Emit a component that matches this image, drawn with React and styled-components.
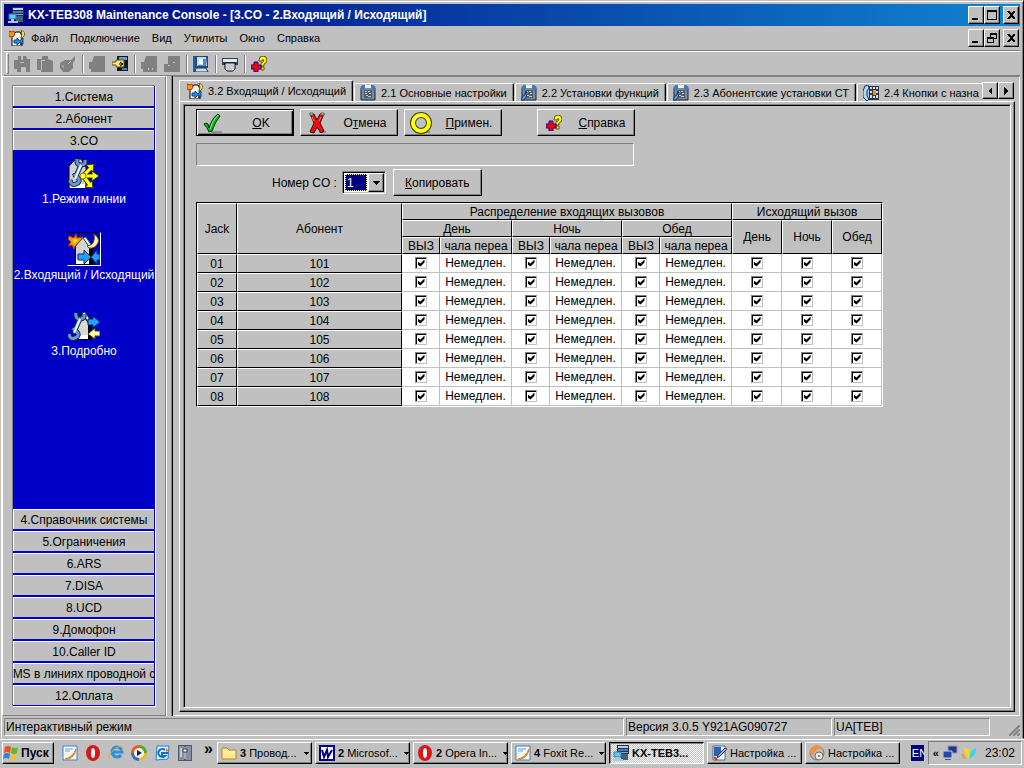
import React from "react";
import styled, { createGlobalStyle, css } from "styled-components";

const face = "#c0c0c0";
const shade = "#808080";

const Global_Style = createGlobalStyle`
  * {
    box-sizing: border-box;
  }
  body {
    margin: 0;
    background: ${face};
    color: #000;
    font-family: "Liberation Sans", Arial, sans-serif;
    font-size: 12px;
    line-height: 14px;
  }
  button, select, input {
    font: inherit;
    color: inherit;
    margin: 0;
    padding: 0;
    border-radius: 0;
  }
  svg {
    display: block;
    flex: none;
  }
`;

const raised = css`
  background: ${face};
  border: 1px solid;
  border-color: #fff #000 #000 #fff;
  box-shadow: inset -1px -1px 0 ${shade};
`;

const sunken = css`
  border: 1px solid;
  border-color: ${shade} #fff #fff ${shade};
`;

const Styled_Desktop = styled.div`
  min-height: 100vh;
  display: flex;
  flex-direction: column;
`;

const Styled_Window = styled.div`
  flex: 1;
  display: flex;
  flex-direction: column;
  border: 1px solid;
  border-color: ${face} #000 ${face} ${face};
  box-shadow: inset 1px 1px 0 #fff, inset -1px 0 0 ${shade};
  padding: 3px 3px 0;
`;

const Styled_Title_Bar = styled.header`
  display: flex;
  align-items: center;
  gap: 4px;
  height: 22px;
  padding: 0 1px 0 4px;
  color: #fff;
  background: linear-gradient(to right, #000080, #1084d0);
`;

const Styled_Title = styled.h1`
  flex: 1;
  margin: 0;
  font-size: 12px;
  font-weight: bold;
  white-space: nowrap;
  overflow: hidden;
`;

const Styled_Menu_Bar = styled.nav`
  display: flex;
  align-items: center;
  height: 24px;
  padding: 0 1px 0 5px;
`;

const Styled_Menu_Item = styled.button`
  border: 0;
  padding: 0 6px;
  background: none;
  font-size: 11px;
`;

const Styled_Window_Buttons = styled.div`
  display: flex;
  margin-left: auto;
`;

const Styled_Window_Button = styled.button`
  ${raised}
  width: 16px;
  height: 18px;
  display: grid;
  place-items: center;
  &:last-child {
    margin-left: 3px;
  }
`;

const Styled_Tool_Bar = styled.div`
  display: flex;
  align-items: center;
  height: 26px;
  border-top: 1px solid ${shade};
  border-bottom: 1px solid ${shade};
  box-shadow: inset 0 1px 0 #fff;
  padding: 1px 0 0 2px;
`;

const Styled_Grip = styled.div`
  width: 3px;
  height: 21px;
  margin-right: 1px;
  border: 1px solid;
  border-color: #fff ${shade} ${shade} #fff;
`;

const Styled_Tool = styled.button`
  width: 23px;
  height: 22px;
  border: 0;
  background: none;
  display: grid;
  place-items: center;
`;

const Styled_Separator = styled.div`
  width: 2px;
  height: 18px;
  margin: 0 1px 0 3px;
  border-left: 1px solid ${shade};
  border-right: 1px solid #fff;
`;

const Styled_Main = styled.main`
  flex: 1;
  display: flex;
  min-width: 0;
`;

const Styled_Sidebar = styled.aside`
  flex: none;
  width: 164px;
  display: flex;
  margin-left: -2px;
  padding: 8px 9px;
  border: 1px solid;
  border-color: #fff ${shade} ${shade} #fff;
`;

const Styled_Stack = styled.div`
  ${sunken}
  flex: 1;
  min-width: 0;
  display: flex;
  flex-direction: column;
  background: #0000c8;
`;

const Styled_Section = styled.button`
  flex: none;
  display: flex;
  justify-content: center;
  align-items: center;
  height: 20px;
  margin: 0 1px ${({ $open }) => ($open ? 0 : 2)}px 0;
  border: 0;
  border-top: 1px solid #fff;
  border-left: 1px solid #fff;
  background: ${face};
  white-space: nowrap;
  &:last-child {
    margin-bottom: 1px;
  }
`;

const Styled_Shortcuts = styled.div`
  flex: 1;
  margin-bottom: 2px;
`;

const Styled_Shortcut = styled.button`
  display: flex;
  flex-direction: column;
  align-items: center;
  width: 100%;
  height: 76px;
  padding-top: 6px;
  border: 0;
  background: none;
  color: #fff;
  white-space: nowrap;
`;

const Styled_Shortcut_Icon = styled.span`
  border: 1px solid;
  border-color: ${({ $active }) => ($active ? "#000 #fff #fff #000" : "transparent")};
  margin-bottom: 2px;
`;

const Styled_Splitter = styled.div`
  flex: none;
  width: 7px;
  border-left: 1px solid #fff;
  border-right: 1px solid #000;
  box-shadow: inset -1px 0 0 ${shade};
`;

const Styled_Workspace = styled.section`
  flex: 1;
  min-width: 0;
  display: flex;
  flex-direction: column;
  padding: 3px 4px 3px 5px;
  border: 1px solid;
  border-color: ${shade} #fff #fff transparent;
`;

const Styled_Tabs = styled.div`
  display: flex;
  align-items: flex-end;
  height: 21px;
`;

const Styled_Tab_List = styled.div`
  flex: 1;
  min-width: 0;
  height: 21px;
  display: flex;
  align-items: flex-end;
  gap: 1px;
  overflow: hidden;
`;

const Styled_Tab = styled.button`
  flex: none;
  display: flex;
  align-items: center;
  gap: 5px;
  height: ${({ $active }) => ($active ? 21 : 18)}px;
  padding: 0 6px 0 ${({ $active }) => ($active ? 7 : 5)}px;
  border: 1px solid;
  border-color: #fff #000 transparent #fff;
  border-bottom: 0;
  border-radius: 2px 2px 0 0;
  background: ${face};
  box-shadow: inset -1px 0 0 ${shade};
  font-size: 11px;
  white-space: nowrap;
`;

const Styled_Tab_Scroll = styled.div`
  display: flex;
  align-self: flex-start;
  padding: 2px 1px 0 0;
`;

const Styled_Scroll_Button = styled.button`
  ${raised}
  width: 16px;
  height: 17px;
  display: grid;
  place-items: center;
`;

const Styled_Page_Frame = styled.div`
  ${raised}
  flex: 1;
  display: flex;
  padding: 2px 3px 3px;
`;

const Styled_Page = styled.div`
  flex: 1;
  min-width: 0;
  border: 1px solid;
  border-color: ${shade} #fff #fff ${shade};
  box-shadow: inset 1px 1px 0 #000;
  padding: 4px 12px;
`;

const Styled_Actions = styled.div`
  display: grid;
  grid-template-columns: repeat(3, 98px) 23px 98px;
  column-gap: 6px;
  width: max-content;
  margin-bottom: 7px;
`;

const Styled_Button = styled.button`
  ${raised}
  display: grid;
  grid-template-columns: ${({ $plain }) => ($plain ? "1fr" : "32px 1fr")};
  align-items: center;
  justify-items: center;
  height: 27px;
  padding: 0 ${({ $plain }) => ($plain ? 11 : 0)}px;
  ${({ $default }) =>
    $default &&
    css`
      border-color: #000;
      box-shadow: inset 1px 1px 0 #fff, inset -1px -1px 0 #000, inset -2px -2px 0 ${shade};
    `}
  &:last-child {
    grid-column: ${({ $plain }) => ($plain ? "auto" : 5)};
  }
`;

const Styled_Message = styled.div`
  ${sunken}
  width: 438px;
  max-width: 100%;
  height: 23px;
  margin-bottom: 3px;
`;

const Styled_Line_Row = styled.div`
  display: flex;
  align-items: center;
  padding-left: 76px;
  margin-bottom: 6px;
`;

const Styled_Combo = styled.div`
  display: flex;
  width: 44px;
  height: 23px;
  margin: 0 7px 0 5px;
  padding: 1px;
  background: #fff;
  border: 1px solid;
  border-color: ${shade} #fff #fff ${shade};
  box-shadow: inset 1px 1px 0 #000, inset -1px -1px 0 ${face};
`;

const Styled_Select = styled.select`
  appearance: none;
  flex: 1;
  min-width: 0;
  margin: 1px;
  padding-left: 1px;
  border: 1px dotted #ffff80;
  background: #000080;
  color: #fff;
`;

const Styled_Combo_Arrow = styled.span`
  ${raised}
  width: 16px;
  display: grid;
  place-items: center;
  pointer-events: none;
`;

const Styled_Table = styled.table`
  table-layout: fixed;
  width: 687px;
  border-collapse: separate;
  border-spacing: 0;
  border: 1px solid;
  border-color: #000 #fff #fff #000;
  text-align: center;
  tr {
    height: 19px;
  }
  thead tr {
    height: 17px;
  }
`;

const Styled_Head = styled.th`
  padding: 0;
  border: 1px solid;
  border-color: #fff #000 #000 #fff;
  background: ${face};
  font-weight: normal;
  white-space: nowrap;
`;

const Styled_Cell = styled.td`
  padding: 0;
  border-right: 1px solid ${face};
  border-bottom: 1px solid ${face};
  background: #fff;
  white-space: nowrap;
`;

const Styled_Check = styled.input`
  appearance: none;
  display: block;
  width: 12px;
  height: 12px;
  margin: 0 auto 1px;
  border: 1px solid;
  border-color: ${shade} ${face} ${face} ${shade};
  box-shadow: inset 1px 1px 0 #000;
  background: #fff;
  &:checked::before {
    content: "";
    display: block;
    width: 7px;
    height: 7px;
    margin: 2px;
    background: #000;
    clip-path: polygon(0 2px, 3px 4px, 7px 0, 7px 3px, 3px 7px, 0 5px);
  }
`;

const Styled_Status_Bar = styled.footer`
  display: flex;
  gap: 2px;
  height: 22px;
  margin: 0 -2px 0 -1px;
  padding: 2px 2px 2px 1px;
`;

const Styled_Status = styled.div`
  ${sunken}
  flex: ${({ $width }) => ($width ? `none` : 1)};
  width: ${({ $width }) => ($width ? `${$width}px` : "auto")};
  padding: 1px;
  white-space: nowrap;
`;

const Styled_Size_Grip = styled.div`
  width: 28px;
  display: flex;
  justify-content: flex-end;
  align-items: flex-end;
`;

const Styled_Task_Bar = styled.footer`
  display: flex;
  align-items: center;
  height: 29px;
  padding: 0 2px 3px;
  border-top: 1px solid #fff;
  font-size: 11px;
`;

const Styled_Start = styled.button`
  ${raised}
  flex: none;
  display: flex;
  align-items: center;
  gap: 2px;
  width: 52px;
  height: 22px;
  font-weight: bold;
  font-size: 12px;
`;

const Styled_Quick_Launch = styled.div`
  flex: none;
  display: flex;
  gap: 7px;
  margin: 0 11px 0 8px;
`;

const Styled_Quick_Button = styled.button`
  border: 0;
  background: none;
`;

const Styled_Chevron = styled.span`
  flex: none;
  width: 13px;
  margin-bottom: 8px;
  font-size: 16px;
  font-weight: bold;
`;

const Styled_Tasks = styled.div`
  flex: 1;
  min-width: 0;
  display: flex;
  gap: 3px;
`;

const Styled_Task = styled.button`
  ${raised}
  flex: 0 1 95px;
  min-width: 0;
  height: 22px;
  display: flex;
  align-items: center;
  gap: 3px;
  padding: 0 2px 0 3px;
  white-space: nowrap;
  ${({ $active }) =>
    $active &&
    css`
      font-weight: bold;
      border-color: #000 #fff #fff #000;
      box-shadow: inset 1px 1px 0 ${shade};
      background: repeating-conic-gradient(#fff 0 25%, ${face} 0 50%) 0 0 / 2px 2px;
    `}
`;

const Styled_Task_Label = styled.span`
  flex: 1;
  text-align: left;
`;

const Styled_Language = styled.span`
  width: 13px;
  height: 16px;
  margin-right: 4px;
  padding: 1px 0 0 1px;
  overflow: hidden;
  background: #000080;
  color: #fff;
`;

const Styled_Tray = styled.div`
  ${sunken}
  display: flex;
  align-items: center;
  gap: 3px;
  height: 24px;
  padding: 0 6px 0 4px;
  time {
    margin-left: 5px;
    font-size: 12px;
  }
`;

const Icon = ({ size = 16, box = 16, children }) => (
  <svg width={size} height={size} viewBox={`0 0 ${box} ${box}`} aria-hidden="true">
    {children}
  </svg>
);

const Console_Icon = () => (
  <Icon>
    <path d="M4 0h12v9H4z" fill="#203048" />
    <path d="M5 1h10v2H5z" fill="#b8d0e8" />
    <path d="M5 4h10v2H5z" fill="#4878c0" />
    <path d="M8 7h7v1H8z" fill="#88a8d0" />
    <path d="M8 9h7v6H8z" fill="#406078" />
    <path d="M1 7h7v5H1z" fill="#60c8f8" stroke="#2878b0" />
    <path d="M0 14h10v2H0zM3 12h3v2H3z" fill="#a8c8d8" />
  </Icon>
);

const House = () => (
  <>
    <path d="M7 13 15 4h4l6 9v19H7z" fill="#000" />
    <path d="m8 13 7-8 6 9v17H8z" fill="#d4d4d4" />
    <path d="m15 5 3-1 6 9-2 2z" fill="#d8f0f8" stroke="#305868" />
    <path d="M8 26h13v5H8z" fill="#fff" />
  </>
);

const wrenchPaths = "M9 2q-1 6 4 6t4-5M13 8 7 21M2 23q1 6 6 4t2-6-4-2";

const Wrench = () => (
  <>
    <path d={wrenchPaths} fill="none" stroke="#182848" strokeWidth="5" />
    <path d={wrenchPaths} fill="none" stroke="#6898c8" strokeWidth="3" />
    <path d="M13 8 7 22" fill="none" stroke="#e8f4ff" strokeWidth="2" />
  </>
);

const Line_Mode_Icon = () => (
  <Icon size={32} box={32}>
    <path d="M1 9 8 2h5l5 8v21H1z" fill="#d0d0d0" stroke="#000" />
    <path d="M2 27h15v4H2z" fill="#fff" />
    <Wrench />
    <path d="m16 18 7-7M16 19h11M16 20l6 8" fill="none" stroke="#403800" strokeWidth="5" />
    <path d="m18 8 8-1-1 8zM24 14l7 5-7 5zM17 30l7-6 1 7z" fill="#ffff20" stroke="#403800" />
    <path d="m16 18 7-7M16 19h11M16 20l6 8" fill="none" stroke="#ffff20" strokeWidth="3" />
    <circle cx="15" cy="19" r="3" fill="#ffff40" stroke="#807000" />
  </Icon>
);

const In_Out_Art = () => (
  <>
    <House />
    <path d="m1 3 5 2 2-4 1 4 6-1-3 4-5 5-1 3-2-4-4 1 3-4-3-3z" fill="#ff9800" stroke="#a04800" />
    <path d="m5 6 5 1-4 4z" fill="#ffe838" />
    <path d="M26 1q6 4 4 9-3 6-9 5l-2-2q9-1 7-12z" fill="#fff8a0" stroke="#605010" />
    <path d="M10 21h6v-4l7 7-7 7v-4h-6z" fill="#20a0f8" stroke="#003060" />
    <path d="M32 21h-3v-4l-6 7 6 7v-4h3z" fill="#20a0f8" stroke="#003060" />
  </>
);

const In_Out_Icon = () => (
  <Icon size={32} box={32}>
    <In_Out_Art />
  </Icon>
);

const In_Out_Small_Icon = () => (
  <Icon>
    <path d="M3 5 7 2h4l2 4v10H3z" fill="#f4f4f4" stroke="#000" />
    <path d="M12 6h1v9h-2z" fill="#303030" />
    <path d="m0 1 3 1 2-1 1 2-1 3-3 1-2-1z" fill="#ff9800" stroke="#a04000" />
    <path d="M12 0q5 2 3 6-1 2-3 2 2-4 0-8z" fill="#fff080" stroke="#706010" />
    <path d="M5 10h3V8l3 3 3-3v6l-3-2-3 3v-2H5z" fill="#1890f0" stroke="#104880" />
  </Icon>
);

const Details_Icon = () => (
  <Icon size={32} box={32}>
    <path d="M8 31V12l6-8h4l6 8v19z" fill="#000" />
    <path d="M9 30V13l5-7 6 8v16z" fill="#d8d8d8" />
    <path d="m14 4 3-1 6 9-2 2z" fill="#e8f4f8" stroke="#303840" />
    <path d="M9 26h11v4H9z" fill="#fff" />
    <g transform="translate(-1 2)">
      <Wrench />
    </g>
    <path d="M20 10h5V7l7 6-7 6v-3h-5z" fill="#20a0ff" stroke="#002850" />
    <path d="M32 22h-5v-3l-7 6 7 5v-3h5z" fill="#ffffa8" stroke="#484010" />
  </Icon>
);

const Help_Icon = () => (
  <Icon>
    <path d="M8 4q0-4 4-4t4 4q0 3-3 4v2h-3V7q3-1 3-3-2-1-2 1H8z" fill="#ff0" stroke="#605000" />
    <path d="M10 11h3v3h-3z" fill="#ff0" stroke="#605000" />
    <path d="M3 6h4v3h3v4H7v3H3v-3H0V9h3z" fill="#f00000" stroke="#2000a0" />
  </Icon>
);

const Connect_Icon = () => (
  <Icon>
    <path d="M5 0h11v15H5z" fill="#101820" />
    <path d="M7 1h8v3H7z" fill="#7098d0" />
    <path d="M10 12h5v2h-5z" fill="#4080d0" />
    <path d="M0 6h4V4h8v7H4V9H0z" fill="#ffe880" stroke="#605010" />
    <path d="m8 6 3 2-3 2M7 8h4" fill="none" stroke="#000" />
  </Icon>
);

const Monitor_Icon = () => (
  <Icon>
    <path d="M0 0h2v16H0z" fill="#2060a0" />
    <path d="M2 0h13v12H2z" fill="#304870" />
    <path d="M4 1h9l1 9H4z" fill="#b8dcf4" />
    <path d="M6 3h4v5H6z" fill="#fff" />
    <path d="M10 3h3v6h-3zM5 9h8v1H5z" fill="#3890d0" />
    <path d="M3 12h10l2 4H2z" fill="#c8d8e8" stroke="#203858" />
  </Icon>
);

const Printer_Icon = () => (
  <Icon>
    <path d="M0 2h16v7H0z" fill="#304058" />
    <path d="M1 3h14v3H1z" fill="#e0e8f0" />
    <path d="M3 7h10v6l-2 2H5l-2-2z" fill="#fff" stroke="#000" />
    <path d="M5 8v6M7 8v6M9 8v6M11 8v5" stroke="#8898a8" />
  </Icon>
);

const disabledShapes = [
  "M4 0h3v4h2V0h3l1 3h3v13h-4v-5H7v5H3v-3H0V4h4z",
  "M0 3h5V0h6v3l5 2v11H4v-2H0z",
  "M5 4h6l4-4v4l-2 3v5l-4 4H3l-3-4V7z",
  "M5 0h11v16H2v-3H0V6h3z",
  "M5 0h11v16H2v-3H0V6h3z",
  "M4 0h12v16H0V8h4z",
];

const Disabled_Icon = ({ shape }) => (
  <Icon>
    <path d={disabledShapes[shape]} fill={shade} />
    {shape === 0 && <path d="M6 6h4v1H6z" fill={face} />}
    {shape === 1 && <path d="M4 4h4v1H5v9H4z" fill={face} />}
    {shape === 2 && <path d="m8 8 3-3M3 9v3" stroke={face} />}
    {shape === 4 && <path d="M7 12h1v2H7zM11 12h1v2h-1z" fill={face} />}
    {shape === 5 && <path d="M4 9h2v1H4zM9 6h2v1H9z" fill={face} />}
  </Icon>
);

const System_Tab_Icon = ({ kind }) => (
  <Icon>
    {kind === "keys" ? (
      <>
        <path d="M5 0 2 1 0 6v6l4 4 2-2-2-3V6l2-3z" fill="#b0d8f8" stroke="#103060" />
        <path d="M6 1h10v14H6z" fill="#303848" />
        <path d="M7 2h2v2H7zM10 2h2v2h-2zM13 2h2v2h-2zM7 6h2v2H7zM13 6h2v2h-2zM7 10h2v3H7zM10 11h2v2h-2zM13 10h2v3h-2z" fill="#c8e0f0" />
        <path d="M10 5h3v5h-3z" fill="#ff9000" />
      </>
    ) : (
      <>
        <path d="M2 1h12l1 3v11H1V4z" fill="#788898" stroke="#182840" />
        <path d="M1 1h4L4 5H0zM11 1h4l1 4h-4z" fill="#3878c8" />
        <path d="M5 0h6v3H5z" fill="#e8f4fc" />
        <path d="M4 5h8v8H4z" fill="#505c68" />
        <path d="M5 6h2v1H5zM8 6h2v1H8zM5 8h2v1H5zM9 8h2v1H9zM6 10h2v1H6zM8 11h3v1H8z" fill="#c0ccd4" />
        {kind !== "base" && <path d="m0 15 2-4 2-1 1-4 1 3-1 3-2 3z" fill="#68a8e0" stroke="#103060" />}
      </>
    )}
  </Icon>
);

const Ok_Icon = () => (
  <Icon size={22} box={22}>
    <path d="M9 19h11v2H9z" fill="#909090" />
    <path d="M2 12q2-2 4 0l1 4Q10 6 16 2l2 2Q13 10 10 19l-3 1q-2-5-5-8z" fill="#10b020" stroke="#003800" />
    <path d="M8 17q2-8 8-14" fill="none" stroke="#80f080" />
  </Icon>
);

const Cancel_Icon = () => (
  <Icon size={22} box={22}>
    <path d="M13 19h7v2h-7z" fill="#909090" />
    <path d="M4 2h4l3 6 3-6h4l-4 9 4 8-3 2-4-6-3 6-4-1 4-9z" fill="#e81010" stroke="#500000" />
    <path d="m6 5 2 4M15 5l-2 4" stroke="#ff8080" />
    <path d="M4 1h3v2H4zM15 1h3v2h-3z" fill="#d0d0d0" stroke="#606060" />
  </Icon>
);

const Apply_Icon = () => (
  <Icon size={22} box={22}>
    <path d="M11 19h9v2h-9z" fill="#909090" />
    <circle cx="11" cy="11" r="8" fill="none" stroke="#404000" strokeWidth="6" />
    <circle cx="11" cy="11" r="8" fill="none" stroke="#ffff10" strokeWidth="4" />
    <path d="M4 9q2-5 7-6" fill="none" stroke="#ffffc8" strokeWidth="1" />
  </Icon>
);

const Arrow_Icon = ({ d }) => (
  <Icon size={8} box={8}>
    <path d={d} shapeRendering="crispEdges" />
  </Icon>
);

const Window_Glyph = ({ kind }) => (
  <svg width="10" height="10" viewBox="0 0 10 10" aria-hidden="true" shapeRendering="crispEdges">
    {kind === "min" && <path d="M1 8h6v2H1z" />}
    {kind === "max" && <path d="M0 0h10v10H0zM1 2v7h8V2z" fillRule="evenodd" />}
    {kind === "restore" && <path d="M3 0h7v6H7v4H0V4h3zM4 2v2h3v1h2V2zM1 6v3h5V6z" fillRule="evenodd" />}
    {kind === "close" && <path d="M1 1h2l2 2 2-2h2v1L6 5l3 3v1H7L5 7 3 9H1V8l3-3-3-3z" />}
  </svg>
);

const Start_Icon = () => (
  <Icon>
    <path d="M2 2q3-2 6 0L7 8Q4 6 1 8z" fill="#f05020" />
    <path d="M9 2q3 2 6 0l-1 6q-3 2-6 0z" fill="#60b830" />
    <path d="M1 9q3-2 6 0l-1 5q-3-2-6 0z" fill="#3080e0" />
    <path d="M8 9q3 2 6 0l-1 5q-3 2-6 0z" fill="#f8c020" />
  </Icon>
);

const Foxit_Icon = () => (
  <Icon>
    <path d="M1 1h14v14H1z" fill="#f4f8fc" stroke="#4080c0" />
    <path d="M3 4h8M3 6h5" stroke="#60a0e0" />
    <path d="M3 14q8-2 11-10-1 7-7 10z" fill="#f0a020" stroke="#e08010" />
  </Icon>
);

const Opera_Icon = () => (
  <Icon>
    <ellipse cx="8" cy="8" rx="7" ry="8" fill="#d81818" />
    <ellipse cx="8" cy="8" rx="2" ry="5" fill="#fff" />
  </Icon>
);

const Explorer_Icon = () => (
  <Icon>
    <path d="M13 10a5 5 0 1 1 1-3H5" fill="none" stroke="#2890e0" strokeWidth="3" />
    <path d="M1 14Q0 9 7 4t8-2q1 1-1 4" fill="none" stroke="#e8b020" strokeWidth="1" />
  </Icon>
);

const Player_Icon = () => (
  <Icon>
    <path d="M8 0a8 8 0 0 1 8 8H8z" fill="#58a828" />
    <path d="M16 8a8 8 0 0 1-8 8V8z" fill="#f0b820" />
    <path d="M8 16a8 8 0 0 1-8-8h8z" fill="#3070d0" />
    <path d="M0 8a8 8 0 0 1 8-8v8z" fill="#e86020" />
    <circle cx="8" cy="8" r="5" fill="#f4f4f4" />
    <path d="m6 5 5 3-5 3z" fill="#102040" />
  </Icon>
);

const Outlook_Icon = () => (
  <Icon>
    <path d="M3 1h12l-1 13-12 1z" fill="#d8ecfc" stroke="#2880d0" />
    <path d="M11 5a4 4 0 1 0 0 6H8V8h6" fill="none" stroke="#1070c8" strokeWidth="2" />
    <path d="m12 3 3 3-3 1z" fill="#f08020" />
  </Icon>
);

const Mixer_Icon = () => (
  <Icon>
    <path d="M1 0h14v16H1z" fill="#505870" />
    <path d="M2 1h5v14H2zM9 1h5v14H9z" fill="#8890a8" />
    <path d="M8 2v12M4 3v9" stroke="#fff" />
    <path d="M6 4h4v3H6z" fill="#fff" stroke="#303850" />
  </Icon>
);

const Folder_Icon = () => (
  <Icon>
    <path d="M1 3h5l2 2h7v9H1z" fill="#ffe890" stroke="#b08820" />
    <path d="M2 7h12" stroke="#fff8d0" />
  </Icon>
);

const Word_Icon = () => (
  <Icon>
    <path d="M0 0h16v16H0z" fill="#000090" />
    <path d="M2 2h12v12H2z" fill="#fff" />
    <path d="m3 5 2 7 3-7 1 7 4-7" fill="none" stroke="#000090" strokeWidth="2" />
  </Icon>
);

const Setup_Icon = () => (
  <Icon>
    <path d="M2 1h12v14H2z" fill="#f4f8fc" stroke="#506890" />
    <path d="M3 2h7v9H3z" fill="#3060b0" />
    <path d="m6 13 1-3 7-7 2 1-7 7z" fill="#a0b8d0" stroke="#203860" />
    <path d="m3 12 3 3" stroke="#d03020" strokeWidth="2" />
  </Icon>
);

const Globe_Icon = () => (
  <Icon>
    <circle cx="8" cy="8" r="7" fill="#b8b8b8" stroke="#787878" />
    <path d="M1 7a7 7 0 0 1 13-3q-6-1-8 3t-4 3z" fill="#f09040" />
    <circle cx="10" cy="11" r="4" fill="#e8e8e8" stroke="#707070" />
    <circle cx="10" cy="11" r="1" fill="#606060" />
  </Icon>
);

const Network_Icon = () => (
  <Icon>
    <path d="M6 1h9v7H6z" fill="#203898" stroke="#9098b0" />
    <path d="M1 6h9v7H1z" fill="#2848a8" stroke="#c8c8d8" />
    <path d="M3 14h6v1H3z" fill="#505870" />
  </Icon>
);

const Tray_Icon = () => (
  <Icon>
    <path d="M0 9q4-1 5 5-4 0-5-5z" fill="#e8a020" />
    <path d="m3 3 5 1v9q-4-3-5-10z" fill="#f8d818" />
    <path d="M9 14Q8 5 15 3q1 5-6 11z" fill="#30d8e8" />
  </Icon>
);

const menus = ["Файл", "Подключение", "Вид", "Утилиты", "Окно", "Справка"];

const tabs = [
  { title: "3.2 Входящий / Исходящий", icon: <In_Out_Small_Icon /> },
  { title: "2.1 Основные настройки", icon: <System_Tab_Icon kind="base" /> },
  { title: "2.2 Установки функций", icon: <System_Tab_Icon kind="functions" /> },
  { title: "2.3 Абонентские установки СТ", icon: <System_Tab_Icon kind="phones" /> },
  { title: "2.4 Кнопки с назна", icon: <System_Tab_Icon kind="keys" /> },
];

const shortcuts = [
  { title: "1.Режим линии", icon: <Line_Mode_Icon /> },
  { title: "2.Входящий / Исходящий", icon: <In_Out_Icon />, active: true },
  { title: "3.Подробно", icon: <Details_Icon /> },
];

const lowerSections = [
  "4.Справочник системы",
  "5.Ограничения",
  "6.ARS",
  "7.DISA",
  "8.UCD",
  "9.Домофон",
  "10.Caller ID",
  "MS в линиях проводной с",
  "12.Оплата",
];

const quickLaunch = [
  ["Foxit", <Foxit_Icon />],
  ["Opera", <Opera_Icon />],
  ["Internet Explorer", <Explorer_Icon />],
  ["Media Player", <Player_Icon />],
  ["Outlook Express", <Outlook_Icon />],
  ["Mixer", <Mixer_Icon />],
];

const tasks = [
  { count: 3, title: "Провод...", icon: <Folder_Icon /> },
  { count: 2, title: "Microsof...", icon: <Word_Icon /> },
  { count: 2, title: "Opera In...", icon: <Opera_Icon /> },
  { count: 4, title: "Foxit Re...", icon: <Foxit_Icon /> },
  { title: "KX-TEB3...", icon: <Console_Icon />, active: true },
  { title: "Настройка ...", icon: <Setup_Icon /> },
  { title: "Настройка ...", icon: <Globe_Icon /> },
];

const periods = ["День", "Ночь", "Обед"];
const jacks = [1, 2, 3, 4, 5, 6, 7, 8];

const Window_Controls = ({ middle }) => (
  <Styled_Window_Buttons>
    <Styled_Window_Button aria-label="Свернуть"><Window_Glyph kind="min" /></Styled_Window_Button>
    <Styled_Window_Button aria-label="Развернуть"><Window_Glyph kind={middle} /></Styled_Window_Button>
    <Styled_Window_Button aria-label="Закрыть"><Window_Glyph kind="close" /></Styled_Window_Button>
  </Styled_Window_Buttons>
);

const Tool_Bar = () => (
  <Styled_Tool_Bar>
    <Styled_Grip />
    {[0, 1, 2].map((n) => (
      <Styled_Tool key={n} disabled aria-label={`Файл ${n + 1}`}><Disabled_Icon shape={n} /></Styled_Tool>
    ))}
    <Styled_Separator />
    <Styled_Tool disabled aria-label="Отключить"><Disabled_Icon shape={3} /></Styled_Tool>
    <Styled_Tool aria-label="Подключить"><Connect_Icon /></Styled_Tool>
    <Styled_Separator />
    <Styled_Tool disabled aria-label="Загрузить"><Disabled_Icon shape={4} /></Styled_Tool>
    <Styled_Tool disabled aria-label="Выгрузить"><Disabled_Icon shape={5} /></Styled_Tool>
    <Styled_Separator />
    <Styled_Tool aria-label="Монитор"><Monitor_Icon /></Styled_Tool>
    <Styled_Separator />
    <Styled_Tool aria-label="Печать"><Printer_Icon /></Styled_Tool>
    <Styled_Separator />
    <Styled_Tool aria-label="Справка"><Help_Icon /></Styled_Tool>
  </Styled_Tool_Bar>
);

const Sidebar = () => (
  <Styled_Sidebar>
    <Styled_Stack>
      <Styled_Section>1.Система</Styled_Section>
      <Styled_Section>2.Абонент</Styled_Section>
      <Styled_Section $open>3.CO</Styled_Section>
      <Styled_Shortcuts>
        {shortcuts.map(({ title, icon, active }) => (
          <Styled_Shortcut key={title}>
            <Styled_Shortcut_Icon $active={active}>{icon}</Styled_Shortcut_Icon>
            {title}
          </Styled_Shortcut>
        ))}
      </Styled_Shortcuts>
      {lowerSections.map((title) => (
        <Styled_Section key={title}>{title}</Styled_Section>
      ))}
    </Styled_Stack>
  </Styled_Sidebar>
);

const Check_Cell = ({ label }) => (
  <Styled_Cell>
    <Styled_Check type="checkbox" defaultChecked aria-label={label} />
  </Styled_Cell>
);

const Jack_Table = () => (
  <Styled_Table>
    <colgroup>
      <col style={{ width: 40 }} />
      <col style={{ width: 165 }} />
      {periods.map((period) => (
        <React.Fragment key={period}>
          <col style={{ width: 38 }} />
          <col style={{ width: 72 }} />
        </React.Fragment>
      ))}
      {periods.map((period) => <col key={period} style={{ width: 50 }} />)}
    </colgroup>
    <thead>
      <tr>
        <Styled_Head rowSpan={3}>Jack</Styled_Head>
        <Styled_Head rowSpan={3}>Абонент</Styled_Head>
        <Styled_Head colSpan={6}>Распределение входящих вызовов</Styled_Head>
        <Styled_Head colSpan={3}>Исходящий вызов</Styled_Head>
      </tr>
      <tr>
        {periods.map((period) => <Styled_Head key={period} colSpan={2}>{period}</Styled_Head>)}
        {periods.map((period) => <Styled_Head key={period} rowSpan={2}>{period}</Styled_Head>)}
      </tr>
      <tr>
        {periods.map((period) => (
          <React.Fragment key={period}>
            <Styled_Head>ВЫЗ</Styled_Head>
            <Styled_Head>чала переа</Styled_Head>
          </React.Fragment>
        ))}
      </tr>
    </thead>
    <tbody>
      {jacks.map((jack) => (
        <tr key={jack}>
          <Styled_Head>0{jack}</Styled_Head>
          <Styled_Head>{100 + jack}</Styled_Head>
          {periods.map((period) => (
            <React.Fragment key={period}>
              <Check_Cell label={`ВЫЗ ${period} 0${jack}`} />
              <Styled_Cell>Немедлен.</Styled_Cell>
            </React.Fragment>
          ))}
          {periods.map((period) => <Check_Cell key={period} label={`Исходящий вызов ${period} 0${jack}`} />)}
        </tr>
      ))}
    </tbody>
  </Styled_Table>
);

const Task_Bar = () => (
  <Styled_Task_Bar>
    <Styled_Start><Start_Icon />Пуск</Styled_Start>
    <Styled_Quick_Launch>
      {quickLaunch.map(([name, icon]) => (
        <Styled_Quick_Button key={name} aria-label={name}>{icon}</Styled_Quick_Button>
      ))}
    </Styled_Quick_Launch>
    <Styled_Chevron>»</Styled_Chevron>
    <Styled_Tasks>
      {tasks.map(({ count, title, icon, active }, index) => (
        <Styled_Task key={index} $active={active}>
          {icon}
          <Styled_Task_Label>{count && <b>{count} </b>}{title}</Styled_Task_Label>
          {count && <Arrow_Icon d="M2 3h6L5 6z" />}
        </Styled_Task>
      ))}
    </Styled_Tasks>
    <Styled_Language>EN</Styled_Language>
    <Styled_Tray>
      <b>«</b>
      <Network_Icon />
      <Tray_Icon />
      <time>23:02</time>
    </Styled_Tray>
  </Styled_Task_Bar>
);

const App = () => (
  <>
    <Global_Style />
    <Styled_Desktop>
      <Styled_Window>
        <Styled_Title_Bar>
          <Console_Icon />
          <Styled_Title>KX-TEB308 Maintenance Console - [3.CO - 2.Входящий / Исходящий]</Styled_Title>
          <Window_Controls middle="max" />
        </Styled_Title_Bar>
        <Styled_Menu_Bar>
          <In_Out_Small_Icon />
          {menus.map((name) => <Styled_Menu_Item key={name}>{name}</Styled_Menu_Item>)}
          <Window_Controls middle="restore" />
        </Styled_Menu_Bar>
        <Tool_Bar />
        <Styled_Main>
          <Sidebar />
          <Styled_Splitter />
          <Styled_Workspace>
            <Styled_Tabs>
              <Styled_Tab_List role="tablist">
                {tabs.map(({ title, icon }, index) => (
                  <Styled_Tab key={title} role="tab" aria-selected={index === 0} $active={index === 0}>
                    {icon}
                    {title}
                  </Styled_Tab>
                ))}
              </Styled_Tab_List>
              <Styled_Tab_Scroll>
                <Styled_Scroll_Button aria-label="Назад"><Arrow_Icon d="M6 0v8L2 4z" /></Styled_Scroll_Button>
                <Styled_Scroll_Button aria-label="Вперёд"><Arrow_Icon d="M2 0v8l4-4z" /></Styled_Scroll_Button>
              </Styled_Tab_Scroll>
            </Styled_Tabs>
            <Styled_Page_Frame>
              <Styled_Page>
                <Styled_Actions>
                  <Styled_Button $default><Ok_Icon /><span><u>O</u>K</span></Styled_Button>
                  <Styled_Button><Cancel_Icon /><span>О<u>т</u>мена</span></Styled_Button>
                  <Styled_Button><Apply_Icon /><span><u>П</u>римен.</span></Styled_Button>
                  <Styled_Button><Help_Icon /><span><u>С</u>правка</span></Styled_Button>
                </Styled_Actions>
                <Styled_Message />
                <Styled_Line_Row>
                  <label htmlFor="line">Номер CO :</label>
                  <Styled_Combo>
                    <Styled_Select id="line" defaultValue="1">
                      <option>1</option>
                      <option>2</option>
                      <option>3</option>
                    </Styled_Select>
                    <Styled_Combo_Arrow><Arrow_Icon d="M0 2h8L4 6z" /></Styled_Combo_Arrow>
                  </Styled_Combo>
                  <Styled_Button $plain><span><u>К</u>опировать</span></Styled_Button>
                </Styled_Line_Row>
                <Jack_Table />
              </Styled_Page>
            </Styled_Page_Frame>
          </Styled_Workspace>
        </Styled_Main>
        <Styled_Status_Bar>
          <Styled_Status>Интерактивный режим</Styled_Status>
          <Styled_Status $width={206}>Версия 3.0.5 Y921AG090727</Styled_Status>
          <Styled_Status $width={156}>UA[TEB]</Styled_Status>
          <Styled_Size_Grip>
            <svg width="12" height="12" viewBox="0 0 12 12" aria-hidden="true">
              <path d="M0 12 12 0M4 12l8-8M8 12l4-4" stroke="#fff" />
              <path d="M1 12 12 1M5 12l7-7M9 12l3-3" stroke={shade} strokeWidth="2" />
            </svg>
          </Styled_Size_Grip>
        </Styled_Status_Bar>
      </Styled_Window>
      <Task_Bar />
    </Styled_Desktop>
  </>
);

export default App;
